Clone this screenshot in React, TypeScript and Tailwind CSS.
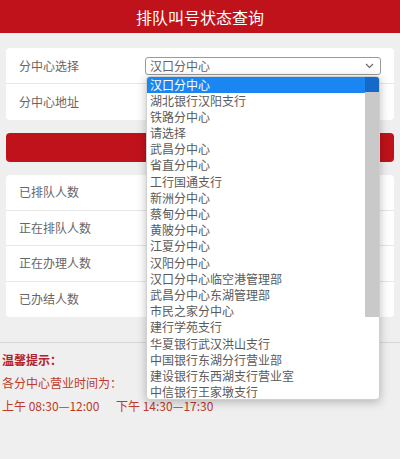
import React from 'react';

const options = [
  '汉口分中心',
  '湖北银行汉阳支行',
  '铁路分中心',
  '请选择',
  '武昌分中心',
  '省直分中心',
  '工行国通支行',
  '新洲分中心',
  '蔡甸分中心',
  '黄陂分中心',
  '江夏分中心',
  '汉阳分中心',
  '汉口分中心临空港管理部',
  '武昌分中心东湖管理部',
  '市民之家分中心',
  '建行学苑支行',
  '华夏银行武汉洪山支行',
  '中国银行东湖分行营业部',
  '建设银行东西湖支行营业室',
  '中信银行王家墩支行',
];

const stats = ['已排队人数', '正在排队人数', '正在办理人数', '已办结人数'];

export default function App() {
  return (
    <div
      className="w-[400px] h-[459px] overflow-hidden bg-[#efefef] text-[12px]"
      style={{ fontFamily: '"Noto Sans CJK SC", "Noto Sans", sans-serif' }}
    >
      {/* Header */}
      <div className="h-[33px] bg-[#c0121a] flex items-center justify-center text-white text-[16px]">
        排队叫号状态查询
      </div>

      <div className="px-[6px] pt-[15px]">
        {/* Branch select card */}
        <div className="bg-white rounded-[4px]">
          <div className="h-[36px] flex items-center pl-[13px] border-b border-[#e6e6e6]">
            <span className="w-[126px] text-[#666]">分中心选择</span>
            <div className="relative">
              <div className="w-[236px] h-[18px] border border-[#9a9a9a] rounded-[3px] flex items-center justify-between pl-[4px] pr-[6px] text-[#666] bg-white">
                <span>汉口分中心</span>
                <svg width="9" height="6" viewBox="0 0 9 6" fill="none">
                  <path d="M1 1l3.5 3.5L8 1" stroke="#666" strokeWidth="1.1" />
                </svg>
              </div>

              {/* Open dropdown list */}
              <div className="absolute z-10 left-[1px] top-[19px] w-[234px] h-[324px] bg-white rounded-[4px] border border-[#d0d0d0] shadow-[0_2px_10px_rgba(0,0,0,0.25)] overflow-hidden">
                {options.map((opt, i) => (
                  <div
                    key={i}
                    className={
                      i === 0
                        ? 'h-[16.2px] leading-[16.2px] pl-[3px] bg-[#1a86f2] text-white'
                        : 'h-[16.2px] leading-[16.2px] pl-[3px] text-[#5a5a5a]'
                    }
                  >
                    {opt}
                  </div>
                ))}
                <div className="absolute right-0 top-0 w-[14px] h-[240px] bg-[#c9c9c9]">
                  <div className="h-[15px] bg-[#1469c9]" />
                </div>
              </div>
            </div>
          </div>
          <div className="h-[36px] flex items-center pl-[13px]">
            <span className="text-[#666]">分中心地址</span>
          </div>
        </div>

        {/* Query button */}
        <div className="mt-[13px] h-[29px] rounded-[4px] bg-[#c0121a]" />

        {/* Stats card */}
        <div className="mt-[13px] bg-white rounded-[4px]">
          {stats.map((s, i) => (
            <div
              key={s}
              className={
                i < stats.length - 1
                  ? 'h-[35.5px] flex items-center pl-[13px] text-[#666] border-b border-[#e6e6e6]'
                  : 'h-[35.5px] flex items-center pl-[13px] text-[#666]'
              }
            >
              {s}
            </div>
          ))}
        </div>
      </div>

      {/* Tips */}
      <div className="mt-[25px] border-t border-[#d6d6d6] px-[2px] pt-[6px]">
        <div className="h-[22px] flex items-center font-bold text-[#b3202a]">温馨提示：</div>
        <div className="h-[23px] flex items-center text-[#c0392b]">各分中心营业时间为：</div>
        <div className="h-[24px] flex items-center text-[#c0392b]">
          <span className="w-[114px]">上午 08:30—12:00</span>
          <span>下午 14:30—17:30</span>
        </div>
      </div>
    </div>
  );
}
